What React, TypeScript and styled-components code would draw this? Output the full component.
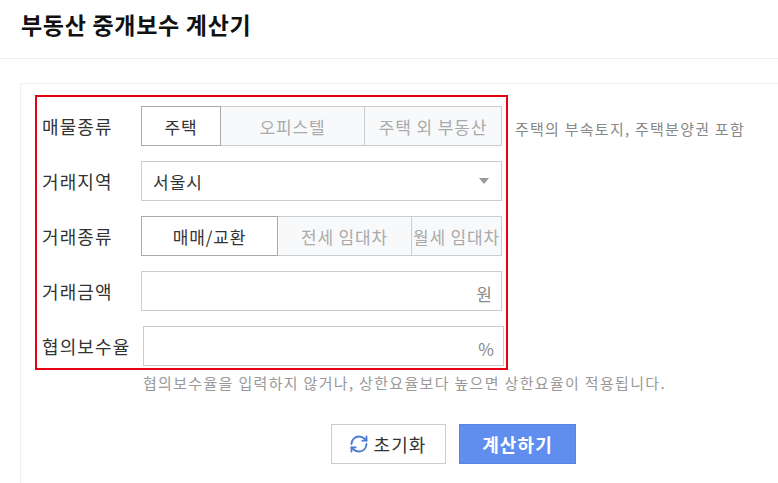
import { RefreshCw } from 'lucide-react';
import styled, { createGlobalStyle } from 'styled-components';

const GlobalStyle = createGlobalStyle`
  html, body {
    margin: 0;
    height: 100%;
    overflow: hidden;
    background: #fff;
  }
  body {
    font-family: 'Noto Sans CJK KR', 'Noto Sans', sans-serif;
    color: #333;
  }
`;

const Header = styled.header`
  height: 59px;
  box-sizing: border-box;
  border-bottom: 1px solid #eeeeee;
  padding: 7px 0 0 21px;
`;

const Title = styled.h1`
  margin: 0;
  font-size: 23px;
  line-height: 34px;
  font-weight: 700;
  letter-spacing: 0.7px;
  color: #111;
`;

const Card = styled.main`
  margin: 24px -10px 0 20px;
  padding: 11px 0 0 14px;
  height: 420px;
  box-sizing: border-box;
  border: 1px solid #eeeeee;
`;

const TopRow = styled.div`
  display: flex;
  align-items: flex-start;
`;

const Highlight = styled.form`
  width: 473px;
  height: 275px;
  box-sizing: border-box;
  border: 2px solid #e60012;
  padding: 9px 0 0 5px;
  display: flex;
  flex-direction: column;
  gap: 15px;
  flex: none;
`;

const Row = styled.div`
  display: flex;
  align-items: center;
  height: 40px;
`;

const Label = styled.span<{ $width?: number }>`
  width: ${({ $width }) => $width ?? 99}px;
  flex: none;
  font-size: 18px;
  line-height: 26px;
  letter-spacing: 1.1px;
  color: #333;
  white-space: nowrap;
`;

const Segments = styled.div`
  display: flex;
  width: 361px;
  height: 40px;
`;

const Segment = styled.button<{ $width: number; $active?: boolean }>`
  width: ${({ $width }) => $width}px;
  height: 40px;
  flex: none;
  padding: 0;
  margin-left: -1px;
  box-sizing: border-box;
  border: 1px solid ${({ $active }) => ($active ? '#aaaaaa' : '#cccccc')};
  background: ${({ $active }) => ($active ? '#fff' : '#f8f9fb')};
  color: ${({ $active }) => ($active ? '#333' : '#aaaaaa')};
  font-family: inherit;
  font-size: 17px;
  letter-spacing: 0.85px;
  white-space: nowrap;
  position: relative;
  z-index: ${({ $active }) => ($active ? 1 : 0)};

  &:first-child {
    margin-left: 0;
  }
`;

const SelectBox = styled.div`
  width: 361px;
  height: 40px;
  box-sizing: border-box;
  border: 1px solid #cccccc;
  padding: 0 12px 0 11px;
  display: flex;
  align-items: center;
  justify-content: space-between;
  font-size: 17px;
  letter-spacing: 1px;
  color: #333;
`;

const Caret = styled.span`
  width: 0;
  height: 0;
  border-left: 5px solid transparent;
  border-right: 5px solid transparent;
  border-top: 6px solid #999999;
`;

const Field = styled.div`
  width: 361px;
  height: 40px;
  box-sizing: border-box;
  border: 1px solid #cccccc;
  padding: 4px 9px 0 11px;
  display: flex;
  align-items: center;
`;

const FieldInput = styled.input`
  flex: 1;
  min-width: 0;
  border: none;
  outline: none;
  padding: 0;
  background: none;
  font-family: inherit;
  font-size: 16px;
`;

const Unit = styled.span`
  font-size: 17px;
  color: #888888;
`;

const SideHint = styled.p`
  margin: 23px 0 0 7px;
  font-size: 15px;
  line-height: 22px;
  letter-spacing: 1.25px;
  color: #888888;
  white-space: nowrap;
`;

const Note = styled.p`
  margin: 2px 0 0 108px;
  font-size: 15px;
  line-height: 22px;
  letter-spacing: 1.32px;
  color: #999999;
  white-space: nowrap;
`;

const Actions = styled.div`
  display: flex;
  gap: 13px;
  margin: 30px 0 0 296px;
`;

const ResetButton = styled.button`
  width: 115px;
  height: 40px;
  box-sizing: border-box;
  border: 1px solid #cccccc;
  background: #fff;
  display: flex;
  align-items: center;
  justify-content: center;
  gap: 5px;
  padding: 0 2px 0 0;
  font-family: inherit;
  font-size: 18px;
  letter-spacing: 1.1px;
  color: #333;
`;

const SubmitButton = styled.button`
  width: 117px;
  height: 40px;
  box-sizing: border-box;
  border: 1px solid #5585ea;
  background: #5f8eef;
  padding: 0;
  font-family: inherit;
  font-size: 18px;
  font-weight: 700;
  letter-spacing: 1.1px;
  color: #fff;
`;

const App = () => (
  <>
    <GlobalStyle />
    <Header>
      <Title>부동산 중개보수 계산기</Title>
    </Header>
    <Card>
      <TopRow>
        <Highlight>
          <Row>
            <Label>매물종류</Label>
            <Segments>
              <Segment type="button" $width={80} $active>주택</Segment>
              <Segment type="button" $width={145}>오피스텔</Segment>
              <Segment type="button" $width={138}>주택 외 부동산</Segment>
            </Segments>
          </Row>
          <Row>
            <Label>거래지역</Label>
            <SelectBox>
              서울시
              <Caret />
            </SelectBox>
          </Row>
          <Row>
            <Label>거래종류</Label>
            <Segments>
              <Segment type="button" $width={137} $active>매매/교환</Segment>
              <Segment type="button" $width={135}>전세 임대차</Segment>
              <Segment type="button" $width={91}>월세 임대차</Segment>
            </Segments>
          </Row>
          <Row>
            <Label>거래금액</Label>
            <Field>
              <FieldInput aria-label="거래금액" />
              <Unit>원</Unit>
            </Field>
          </Row>
          <Row>
            <Label $width={101}>협의보수율</Label>
            <Field>
              <FieldInput aria-label="협의보수율" />
              <Unit>%</Unit>
            </Field>
          </Row>
        </Highlight>
        <SideHint>주택의 부속토지, 주택분양권 포함</SideHint>
      </TopRow>
      <Note>협의보수율을 입력하지 않거나, 상한요율보다 높으면 상한요율이 적용됩니다.</Note>
      <Actions>
        <ResetButton type="button">
          <RefreshCw size={20} color="#4a7bd0" strokeWidth={2.2} />
          초기화
        </ResetButton>
        <SubmitButton type="button">계산하기</SubmitButton>
      </Actions>
    </Card>
  </>
);

export default App;
